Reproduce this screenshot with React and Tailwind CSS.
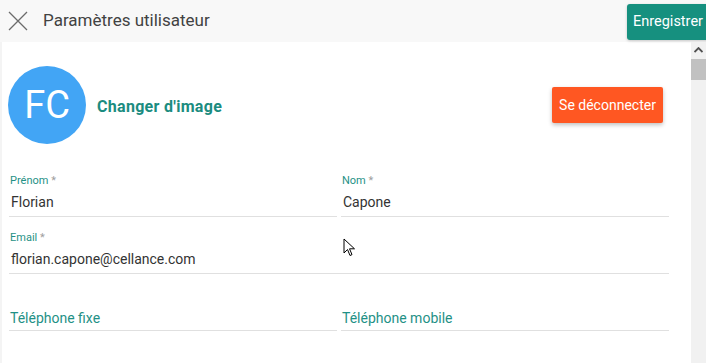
import React from 'react';

function Field({ label, required, value, placeholder }) {
  return (
    <div className="flex flex-col border-b border-[#e0e0e0] pb-[4px]">
      <div className="h-[13px] pl-[1px] text-[11px] leading-[13px] text-[#1f9186]">
        {label ? label : '\u00a0'}
        {required && <span className="text-[#9e9e9e]"> *</span>}
      </div>
      {value ? (
        <div className="mt-[5px] h-[20px] pl-[2px] text-[14px] leading-[20px] text-[#333333]">{value}</div>
      ) : (
        <div className="mt-[5px] h-[20px] pl-[1px] pt-[2px] text-[14px] leading-[20px] text-[#1f9186]">{placeholder}</div>
      )}
    </div>
  );
}

export default function App() {
  return (
    <div className="relative w-[706px] h-[363px] overflow-hidden bg-white font-['Roboto',sans-serif]">
      {/* header */}
      <div className="flex h-[42px] items-center bg-[#f8f8f8]">
        <svg width="20" height="20" viewBox="0 0 20 20" className="ml-[8px] shrink-0">
          <path d="M1 1 L19 19 M19 1 L1 19" stroke="#6b6b6b" strokeWidth="1.3" fill="none" />
        </svg>
        <div className="ml-[15px] text-[17px] text-[#424242]">Paramètres utilisateur</div>
        <button className="ml-auto -mr-[6px] mt-[2px] h-[36px] w-[85px] shrink-0 rounded-[3px] bg-[#16907f] pl-[6px] text-left text-[14.5px] text-white shadow-[0_1px_3px_rgba(0,0,0,0.2)]">
          Enregistrer
        </button>
      </div>

      {/* body */}
      <div className="flex h-[321px]">
        <div className="flex-1 border-l-2 border-[#f4f4f4] pl-[7px] pr-[22px] pt-[24px]">
          <div className="flex items-center">
            <div className="-ml-[1px] flex h-[78px] w-[78px] shrink-0 items-center justify-center rounded-full bg-[#42a5f5] text-[38px] text-white">
              FC
            </div>
            <div className="ml-[11px] pt-[3px] text-[16px] font-bold tracking-[0.3px] text-[#1b8c80]">Changer d'image</div>
            <button className="ml-auto mr-[6px] h-[36px] w-[111px] rounded-[2px] bg-[#ff5722] text-[14px] text-white shadow-[0_2px_4px_rgba(0,0,0,0.25)]">
              Se déconnecter
            </button>
          </div>

          <div className="mt-[30px] grid grid-cols-2 gap-x-[4px] gap-y-[14px]">
            <Field label="Prénom" required value="Florian" />
            <Field label="Nom" required value="Capone" />
            <div className="col-span-2">
              <Field label="Email" required value="florian.capone@cellance.com" />
            </div>
            <Field placeholder="Téléphone fixe" />
            <Field placeholder="Téléphone mobile" />
          </div>
        </div>

        {/* scrollbar */}
        <div className="flex w-[15px] shrink-0 flex-col items-center bg-[#f1f1f1]">
          <svg width="9" height="6" viewBox="0 0 9 6" className="mt-[5px]">
            <path d="M0.5 5 L4.5 1 L8.5 5" stroke="#505050" strokeWidth="1.8" fill="none" />
          </svg>
          <div className="mt-[6px] h-[21px] w-full bg-[#c1c1c1]" />
        </div>
      </div>

      {/* mouse cursor */}
      <svg width="13" height="20" viewBox="0 0 13 20" className="absolute left-[343px] top-[238px]">
        <path d="M1 1 L1 15 L4.5 11.5 L7 17.5 L9 16.6 L6.5 10.8 L11.5 10.8 Z" fill="white" stroke="black" strokeWidth="1" strokeLinejoin="round" />
      </svg>
    </div>
  );
}
